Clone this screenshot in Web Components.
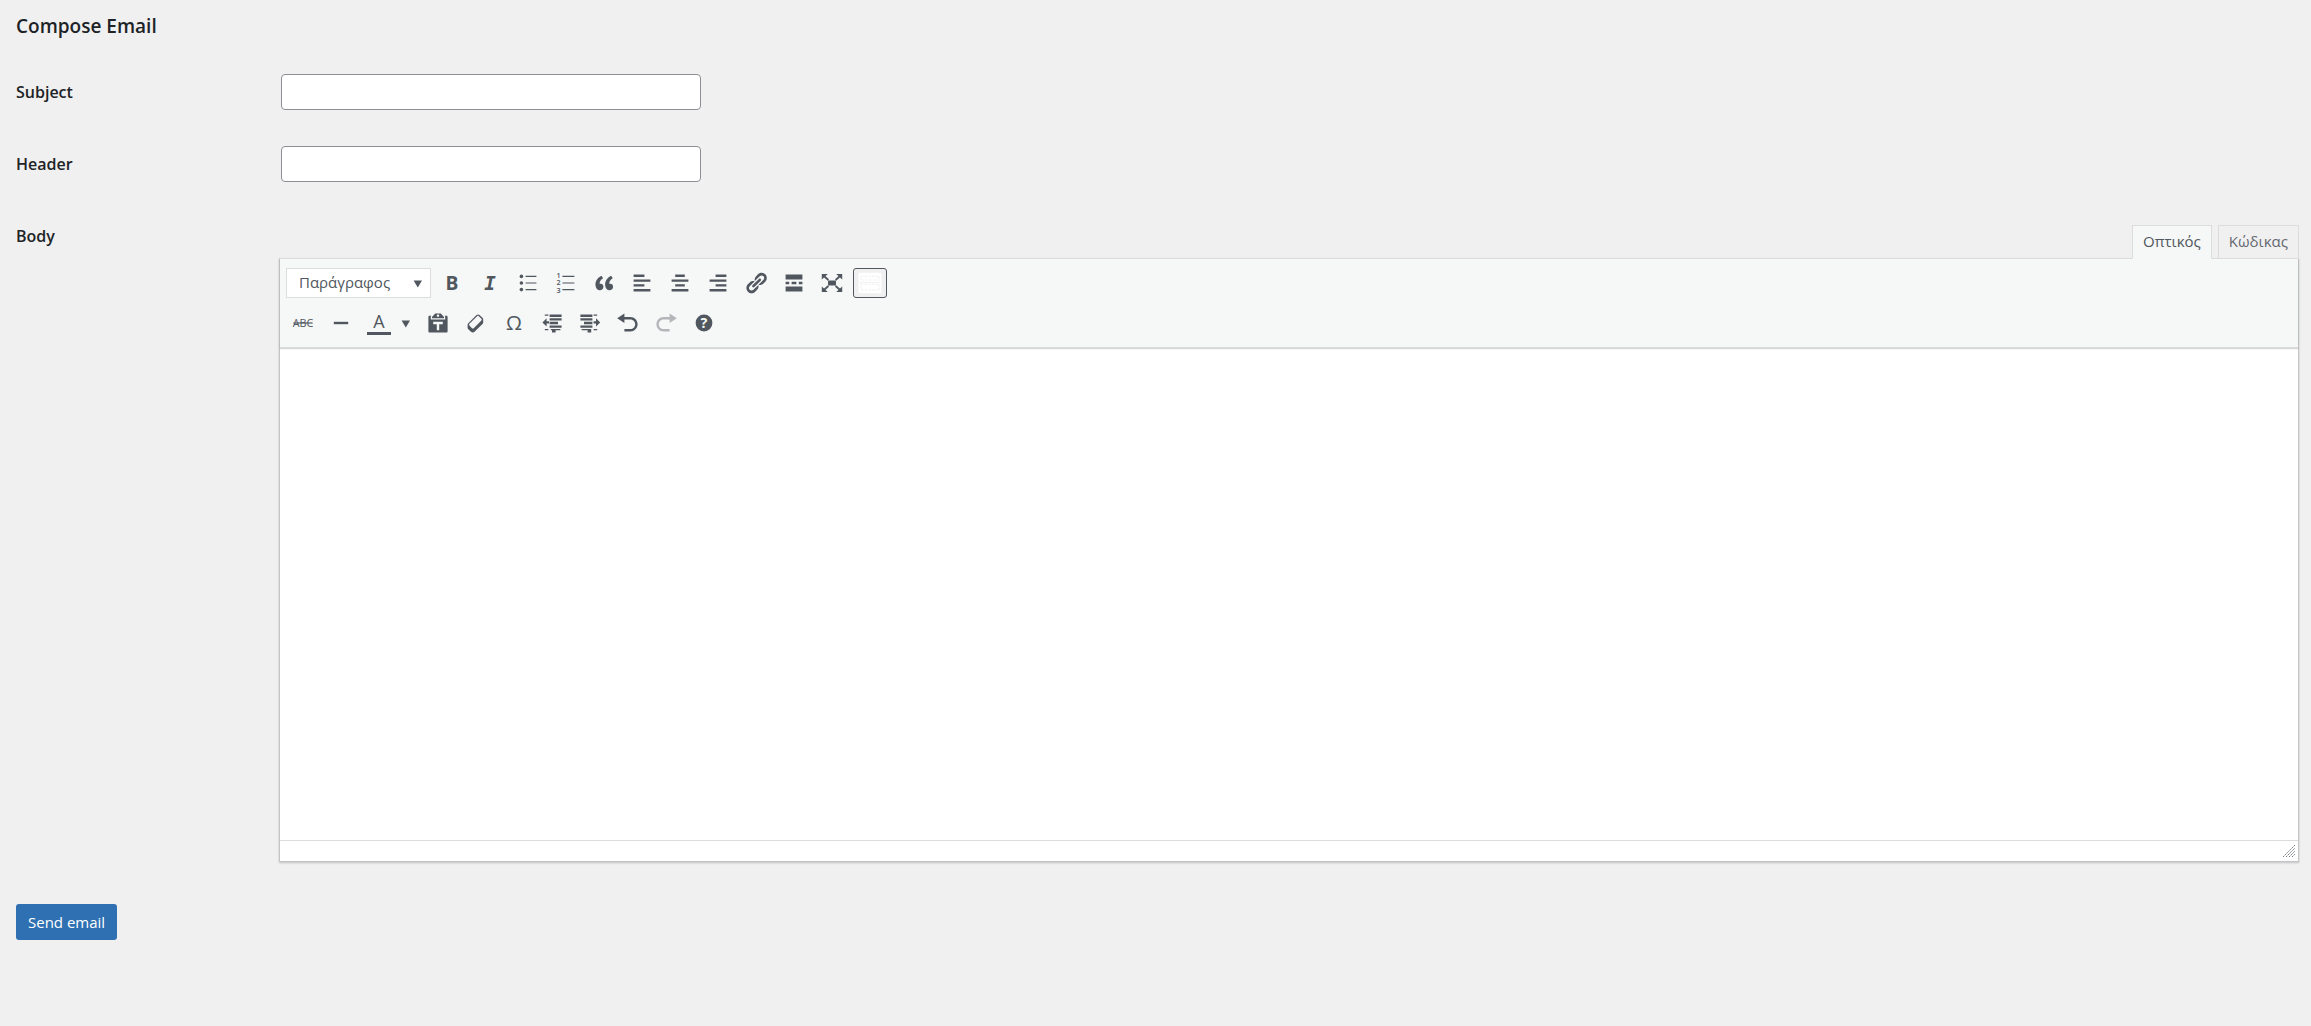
<!DOCTYPE html>
<html lang="el">
<head>
<meta charset="utf-8">
<title>Compose Email</title>
<style>
    body {
        margin: 0;
        background: #f0f0f0;
        color: #1d2327;
        font-family: "Open Sans", "Noto Sans", sans-serif;
        font-size: 15px;
        line-height: 24px;
    }
</style>
</head>
<body>
<compose-page></compose-page>

<script>
// Icon markup, drawn on a 20x20 grid
const ICONS = {
    bold: '<text x="10" y="16" font-size="16" font-weight="700" text-anchor="middle">B</text>',
    italic: '<text x="10" y="16" font-size="16" font-weight="700" font-style="italic" font-family="DejaVu Sans Mono, monospace" text-anchor="middle">I</text>',
    bullist: '<circle cx="4.5" cy="4.5" r="1.5"/><circle cx="4.5" cy="10" r="1.5"/><circle cx="4.5" cy="15.5" r="1.5"/><path d="M8 4h9v1H8zM8 9.5h9v1H8zM8 15h9v1H8z"/>',
    numlist: '<text font-size="6" font-weight="600"><tspan x="2" y="6">1</tspan><tspan x="2" y="12">2</tspan><tspan x="2" y="18">3</tspan></text><path d="M7 4h10v1H7zM7 9.5h10v1H7zM7 15h10v1H7z"/>',
    quote: '<path d="M9.49 13.22c0-.74-.2-1.38-.61-1.9-.62-.78-1.83-.88-2.53-.72-.29-1.65 1.11-3.75 2.92-4.65L7.88 4c-2.73 1.3-5.42 4.28-4.96 8.05C3.21 14.43 4.59 16 6.54 16c.85 0 1.56-.25 2.12-.75s.83-1.18.83-2.03zm8.05 0c0-.74-.2-1.38-.61-1.9-.63-.78-1.83-.88-2.53-.72-.29-1.65 1.11-3.75 2.92-4.65L15.93 4c-2.73 1.3-5.41 4.28-4.95 8.05.29 2.38 1.66 3.95 3.61 3.95.85 0 1.56-.25 2.12-.75s.83-1.18.83-2.03z"/>',
    left: '<path d="M12 5V3H3v2h9zm5 4V7H3v2h14zm-5 4v-2H3v2h9zm5 4v-2H3v2h14z"/>',
    center: '<path d="M14 5V3H6v2h8zm3 4V7H3v2h14zm-3 4v-2H6v2h8zm3 4v-2H3v2h14z"/>',
    right: '<path d="M17 5V3H8v2h9zm0 4V7H3v2h14zm0 4v-2H8v2h9zm0 4v-2H3v2h14z"/>',
    link: '<path d="M17.74 2.76c1.68 1.69 1.68 4.41 0 6.1l-1.53 1.52c-1.12 1.12-2.7 1.47-4.14 1.09l2.62-2.61.76-.77.76-.76c.84-.84.84-2.2 0-3.04-.84-.85-2.2-.85-3.04 0l-.77.76-3.38 3.38c-.37-1.44-.02-3.02 1.1-4.14l1.52-1.53c1.69-1.68 4.42-1.68 6.1 0zM8.59 13.43l5.34-5.34c.42-.42.42-1.1 0-1.52-.44-.43-1.13-.39-1.53 0l-5.33 5.34c-.42.42-.42 1.1 0 1.52.44.43 1.13.39 1.52 0zm-.76 2.29l4.14-4.15c.38 1.44.03 3.02-1.09 4.14l-1.52 1.53c-1.69 1.68-4.41 1.68-6.1 0-1.68-1.68-1.68-4.42 0-6.1l1.53-1.52c1.12-1.12 2.7-1.47 4.14-1.1l-4.14 4.15c-.85.84-.85 2.2 0 3.05.84.84 2.2.84 3.04 0z"/>',
    more: '<path d="M17 7V3H3v4h14zM6 11V9H3v2h3zm6 0V9H8v2h4zm5 0V9h-3v2h3zm0 6v-4H3v4h14z"/>',
    fullscreen: '<path d="M6.7 8h6.600v4H6.700zM1.500 2.500h5l-5 4.500zM18.500 2.500V7l-5-4.500zM1.500 17.500V13l5 4.500zM18.500 17.500h-5l5-4.500z"/><path d="M3 4l4 3.500M17 4l-4 3.500M3 16l4-3.500M17 16l-4-3.500" fill="none" stroke="currentColor" stroke-width="1.500"/>',
    grid: '<path d="M.5 1.500h19v17H.5z" fill="#fff"/><path d="M2.500 4.500h15v3h-15zM2.500 11h15v5h-15z" fill="none" stroke="#f2f2f2" stroke-dasharray="2 1"/><path d="M1 9.500h18" stroke="#f4f4f4"/>',
    strike: '<text x="10" y="13" font-size="9" font-weight="500" text-anchor="middle">ABC</text><path d="M2 9.500h16v1H2z"/>',
    hr: '<path d="M4 9h12v2H4z"/>',
    color: '<text x="10" y="14.500" font-size="15" font-weight="500" text-anchor="middle">A</text><path d="M0 17.500h20V20H0z"/>',
    caret: '<path d="M5.500 8h7L9 13.700z"/>',
    paste: '<path d="M12.38 2L15 5v1H5V5l2.640-3h4.740zM10 5c.55 0 1-.44 1-1 0-.55-.45-1-1-1s-1 .45-1 1c0 .56.45 1 1 1zm5.450-1H17c.55 0 1 .45 1 1v12c0 .56-.45 1-1 1H3c-.55 0-1-.44-1-1V5c0-.55.45-1 1-1h1.550L4 4.630V7h12V4.630zM14 11V9H6v2h3v5h2v-5h3z"/>',
    eraser: '<path d="M14.29 4.59l1.1 1.11c.41.4.61.94.61 1.47v2.12c0 .53-.2 1.07-.61 1.47l-6.63 6.63c-.4.41-.94.61-1.47.61s-1.07-.2-1.47-.61l-1.11-1.1-1.1-1.11c-.41-.4-.61-.94-.61-1.47v-2.12c0-.54.2-1.07.61-1.48l6.63-6.62c.4-.41.94-.61 1.47-.61s1.06.2 1.47.61zm-6.21 9.7l6.42-6.42c.39-.39.39-1.03 0-1.43L12.36 4.3c-.19-.19-.45-.29-.72-.29s-.52.1-.71.29l-6.42 6.42c-.39.4-.39 1.04 0 1.43l2.14 2.14c.38.38 1.04.38 1.43 0z"/>',
    omega: '<text x="10" y="16" font-size="17" font-weight="500" text-anchor="middle">Ω</text>',
    outdent: '<path d="M8 3h10v2H8zM8 6h10v2H8zM8 9h7v2H8zM8 12h10v2H8zM9 15h8v1H9zM10 16h3v2h-3zM4 3h3v1H4zM4 15h3v1H4zM2 9.500L5.500 6v2.500h2v2h-2V13z"/>',
    indent: '<path d="M2 3h10v2H2zM2 6h10v2H2zM5 9h7v2H5zM2 12h10v2H2zM3 15h8v1H3zM8 16h3v2H8zM13 3h3v1h-3zM13 15h3v1h-3zM18.500 9.500L15 6v2.500h-2v2h2V13z"/>',
    undo: '<path d="M12 5H7V2L1 6l6 4V7h5c2.200 0 4 1.800 4 4s-1.800 4-4 4H7v2h5c3.300 0 6-2.700 6-6s-2.700-6-6-6z"/>',
    redo: '<path d="M8 5h5V2l6 4-6 4V7H8c-2.200 0-4 1.800-4 4s1.800 4 4 4h5v2H8c-3.300 0-6-2.700-6-6s2.700-6 6-6z"/>',
    help: '<circle cx="10" cy="10" r="7"/><text x="10" y="14.500" font-size="12" font-weight="700" text-anchor="middle" fill="#f6f7f7">?</text>'
};

class ToolButton extends HTMLElement {
    constructor() {
        super();
        this.attachShadow({ mode: 'open' });
    }

    connectedCallback() {
        const disabled = this.hasAttribute('inactive') ? 'disabled' : '';
        this.shadowRoot.innerHTML = `
            <style>
                :host {
                    display: block;
                    width: 34px;
                    height: 30px;
                }
                :host([icon="caret"]) {
                    width: 21px;
                }
                button {
                    display: flex;
                    align-items: center;
                    justify-content: center;
                    width: 100%;
                    height: 100%;
                    padding: 0;
                    border: 1px solid transparent;
                    border-radius: 3px;
                    background: none;
                    color: #50575e;
                    font-family: inherit;
                    cursor: pointer;
                }
                button:hover:enabled, :host([boxed]) button {
                    border-color: #50575e;
                }
                :host([boxed]) button {
                    background: #f0f0f0;
                }
                button:disabled {
                    color: #b4b7b9;
                    cursor: default;
                }
                svg {
                    flex: none;
                    width: 24px;
                    height: 24px;
                    overflow: visible;
                    fill: currentColor;
                }
            </style>
            <button type="button" aria-label="${this.getAttribute('label')}" ${disabled}>
                <svg viewBox="0 0 20 20" aria-hidden="true">${ICONS[this.getAttribute('icon')]}</svg>
            </button>
        `;
    }
}

class FormatSelect extends HTMLElement {
    constructor() {
        super();
        this.attachShadow({ mode: 'open' });
        this.shadowRoot.innerHTML = `
            <style>
                :host {
                    display: grid;
                    align-items: center;
                    width: 145px;
                    height: 30px;
                }
                select, svg {
                    grid-area: 1 / 1;
                }
                select {
                    appearance: none;
                    box-sizing: border-box;
                    width: 100%;
                    height: 100%;
                    padding: 0 28px 2px 12px;
                    border: 1px solid #dcdcde;
                    border-radius: 0;
                    background: #fff;
                    color: #50575e;
                    font-family: inherit;
                    font-size: 15px;
                }
                svg {
                    justify-self: end;
                    width: 24px;
                    height: 24px;
                    fill: #50575e;
                    pointer-events: none;
                }
            </style>
            <select aria-label="Μορφή">
                <option>Παράγραφος</option>
            </select>
            <svg viewBox="0 0 20 20" aria-hidden="true">${ICONS.caret}</svg>
        `;
    }
}

class EditorToolbar extends HTMLElement {
    constructor() {
        super();
        this.attachShadow({ mode: 'open' });
        this.shadowRoot.innerHTML = `
            <style>
                :host {
                    display: flex;
                    flex-direction: column;
                    gap: 10px;
                    padding: 9px 6px;
                    border-bottom: 1px solid #dcdcde;
                    background: #f6f7f7;
                    box-shadow: 0 1px 1px rgba(0, 0, 0, 0.16);
                }
                .row {
                    display: flex;
                    flex-wrap: wrap;
                    gap: 4px;
                }
                .split {
                    display: flex;
                }
            </style>
            <div class="row">
                <format-select></format-select>
                <tool-button icon="bold" label="Έντονα"></tool-button>
                <tool-button icon="italic" label="Πλάγια"></tool-button>
                <tool-button icon="bullist" label="Λίστα με κουκκίδες"></tool-button>
                <tool-button icon="numlist" label="Αριθμημένη λίστα"></tool-button>
                <tool-button icon="quote" label="Παράθεση"></tool-button>
                <tool-button icon="left" label="Στοίχιση αριστερά"></tool-button>
                <tool-button icon="center" label="Στοίχιση στο κέντρο"></tool-button>
                <tool-button icon="right" label="Στοίχιση δεξιά"></tool-button>
                <tool-button icon="link" label="Σύνδεσμος"></tool-button>
                <tool-button icon="more" label="Διαβάστε περισσότερα"></tool-button>
                <tool-button icon="fullscreen" label="Πλήρης οθόνη"></tool-button>
                <tool-button icon="grid" label="Εργαλειοθήκη" boxed></tool-button>
            </div>
            <div class="row">
                <tool-button icon="strike" label="Διαγράμμιση"></tool-button>
                <tool-button icon="hr" label="Οριζόντια γραμμή"></tool-button>
                <div class="split">
                    <tool-button icon="color" label="Χρώμα κειμένου"></tool-button>
                    <tool-button icon="caret" label="Επιλογή χρώματος"></tool-button>
                </div>
                <tool-button icon="paste" label="Επικόλληση ως κείμενο"></tool-button>
                <tool-button icon="eraser" label="Καθαρισμός μορφοποίησης"></tool-button>
                <tool-button icon="omega" label="Ειδικός χαρακτήρας"></tool-button>
                <tool-button icon="outdent" label="Μείωση εσοχής"></tool-button>
                <tool-button icon="indent" label="Αύξηση εσοχής"></tool-button>
                <tool-button icon="undo" label="Αναίρεση"></tool-button>
                <tool-button icon="redo" label="Επανάληψη" inactive></tool-button>
                <tool-button icon="help" label="Βοήθεια"></tool-button>
            </div>
        `;
    }
}

class RichEditor extends HTMLElement {
    constructor() {
        super();
        this.attachShadow({ mode: 'open' });
        this.shadowRoot.innerHTML = `
            <style>
                :host {
                    display: block;
                    margin-top: 7px;
                }
                .tabs {
                    display: flex;
                    justify-content: flex-end;
                    gap: 6px;
                }
                .tabs button {
                    z-index: 1;
                    height: 34px;
                    margin-bottom: -1px;
                    padding: 0 10px 2px;
                    border: 1px solid #dcdcde;
                    background: #f0f0f0;
                    color: #646970;
                    font-family: inherit;
                    font-size: 15px;
                    cursor: pointer;
                }
                .tabs button[aria-selected="true"] {
                    border-bottom-color: #f6f7f7;
                    background: #f6f7f7;
                    color: #50575e;
                }
                .frame {
                    border: 1px solid #c3c4c7;
                    border-top-color: #dcdcde;
                    background: #fff;
                    box-shadow: 0 1px 2px rgba(0, 0, 0, 0.2);
                }
                ::slotted(textarea) {
                    display: block;
                    box-sizing: border-box;
                    width: 100%;
                    height: 492px;
                    padding: 12px;
                    border: 0;
                    outline: 0;
                    background: transparent;
                    font: inherit;
                    resize: none;
                }
                .status {
                    display: flex;
                    align-items: center;
                    justify-content: flex-end;
                    height: 20px;
                    padding-right: 3px;
                    border-top: 1px solid #dcdcde;
                }
                .status svg {
                    width: 12px;
                    height: 12px;
                }
            </style>
            <div class="tabs" role="tablist">
                <button type="button" role="tab" aria-selected="true">Οπτικός</button>
                <button type="button" role="tab" aria-selected="false">Κώδικας</button>
            </div>
            <div class="frame">
                <editor-toolbar></editor-toolbar>
                <slot></slot>
                <div class="status">
                    <svg viewBox="0 0 12 12" aria-hidden="true"><path d="M0 12L12 0M3 12l9-9M6 12l6-6M9 12l3-3" stroke="#787c82" stroke-dasharray="2 1"/></svg>
                </div>
            </div>
        `;
        const tabs = this.shadowRoot.querySelectorAll('.tabs button');
        tabs.forEach(tab => {
            tab.addEventListener('click', () => {
                tabs.forEach(t => t.setAttribute('aria-selected', String(t === tab)));
            });
        });
    }
}

class FormRow extends HTMLElement {
    constructor() {
        super();
        this.attachShadow({ mode: 'open' });
        this.shadowRoot.innerHTML = `
            <style>
                :host {
                    display: grid;
                    grid-template-columns: 263px minmax(0, 1fr);
                    padding: 18px 0;
                }
                .label {
                    padding-top: 6px;
                    font-size: 16px;
                    font-weight: 600;
                }
            </style>
            <div class="label"><slot name="label"></slot></div>
            <div><slot></slot></div>
        `;
    }
}

class ComposePage extends HTMLElement {
    constructor() {
        super();
        this.attachShadow({ mode: 'open' });
        this.shadowRoot.innerHTML = `
            <style>
                :host {
                    display: block;
                    padding: 14px 12px 40px 16px;
                }
                h2 {
                    margin: 0 0 18px;
                    font-size: 19px;
                    font-weight: 600;
                    line-height: 24px;
                }
                input {
                    display: block;
                    box-sizing: border-box;
                    width: 420px;
                    max-width: 100%;
                    height: 36px;
                    margin: 0 2px;
                    padding: 0 10px;
                    border: 1px solid #8c8f94;
                    border-radius: 4px;
                    background: #fff;
                    color: #2c3338;
                    font: inherit;
                }
                .send {
                    height: 36px;
                    margin-top: 24px;
                    padding: 0 12px;
                    border: 0;
                    border-radius: 3px;
                    background: #2e70b2;
                    color: #fff;
                    font-family: inherit;
                    font-size: 15px;
                    cursor: pointer;
                }
            </style>
            <form>
                <h2>Compose Email</h2>
                <form-row>
                    <label slot="label" for="subject">Subject</label>
                    <input type="text" id="subject" name="subject">
                </form-row>
                <form-row>
                    <label slot="label" for="header">Header</label>
                    <input type="text" id="header" name="header">
                </form-row>
                <form-row>
                    <label slot="label" for="body">Body</label>
                    <rich-editor><textarea id="body" name="body"></textarea></rich-editor>
                </form-row>
                <button class="send" type="submit">Send email</button>
            </form>
        `;
        this.shadowRoot.querySelector('form').addEventListener('submit', e => e.preventDefault());
    }
}

customElements.define('tool-button', ToolButton);
customElements.define('format-select', FormatSelect);
customElements.define('editor-toolbar', EditorToolbar);
customElements.define('rich-editor', RichEditor);
customElements.define('form-row', FormRow);
customElements.define('compose-page', ComposePage);
</script>
</body>
</html>
